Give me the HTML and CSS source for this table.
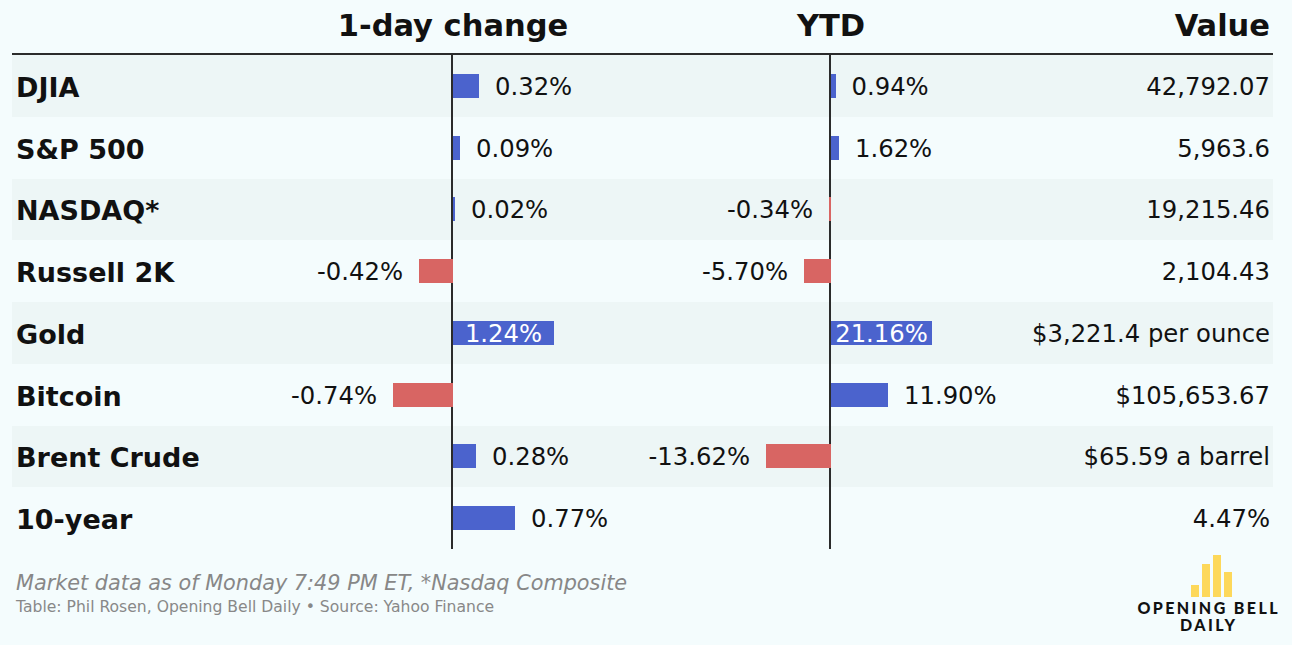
FILE: index.html
```html
<!DOCTYPE html>
<html lang="en">
<head>
<meta charset="utf-8">
<title>Markets</title>
<link rel="stylesheet" href="styles.css">
</head>
<body>
<div class="wrap">
  <div class="head">
    <div></div>
    <div class="hcell">1-day change</div>
    <div class="hcell">YTD</div>
    <div class="hcell hval">Value</div>
  </div>
  <div class="table">
    <div class="row">
      <div class="label">DJIA</div>
      <div class="neg"></div>
      <div class="pos"><span class="bar up" style="width:26px"></span><span class="num">0.32%</span></div>
      <div class="neg"></div>
      <div class="pos"><span class="bar up" style="width:4.5px"></span><span class="num">0.94%</span></div>
      <div class="value">42,792.07</div>
    </div>
    <div class="row">
      <div class="label">S&amp;P 500</div>
      <div class="neg"></div>
      <div class="pos"><span class="bar up" style="width:7px"></span><span class="num">0.09%</span></div>
      <div class="neg"></div>
      <div class="pos"><span class="bar up" style="width:8px"></span><span class="num">1.62%</span></div>
      <div class="value">5,963.6</div>
    </div>
    <div class="row">
      <div class="label">NASDAQ*</div>
      <div class="neg"></div>
      <div class="pos"><span class="bar up" style="width:2px"></span><span class="num">0.02%</span></div>
      <div class="neg"><span class="num">-0.34%</span><span class="bar down" style="width:2px"></span></div>
      <div class="pos"></div>
      <div class="value">19,215.46</div>
    </div>
    <div class="row">
      <div class="label">Russell 2K</div>
      <div class="neg"><span class="num">-0.42%</span><span class="bar down" style="width:34px"></span></div>
      <div class="pos"></div>
      <div class="neg"><span class="num">-5.70%</span><span class="bar down" style="width:27px"></span></div>
      <div class="pos"></div>
      <div class="value">2,104.43</div>
    </div>
    <div class="row">
      <div class="label">Gold</div>
      <div class="neg"></div>
      <div class="pos"><span class="bar up inbar" style="width:101px">1.24%</span></div>
      <div class="neg"></div>
      <div class="pos"><span class="bar up inbar" style="width:101px">21.16%</span></div>
      <div class="value">$3,221.4 per ounce</div>
    </div>
    <div class="row">
      <div class="label">Bitcoin</div>
      <div class="neg"><span class="num">-0.74%</span><span class="bar down" style="width:60px"></span></div>
      <div class="pos"></div>
      <div class="neg"></div>
      <div class="pos"><span class="bar up" style="width:57px"></span><span class="num">11.90%</span></div>
      <div class="value">$105,653.67</div>
    </div>
    <div class="row">
      <div class="label">Brent Crude</div>
      <div class="neg"></div>
      <div class="pos"><span class="bar up" style="width:23px"></span><span class="num">0.28%</span></div>
      <div class="neg"><span class="num">-13.62%</span><span class="bar down" style="width:65px"></span></div>
      <div class="pos"></div>
      <div class="value">$65.59 a barrel</div>
    </div>
    <div class="row">
      <div class="label">10-year</div>
      <div class="neg"></div>
      <div class="pos"><span class="bar up" style="width:62px"></span><span class="num">0.77%</span></div>
      <div class="neg"></div>
      <div class="pos"></div>
      <div class="value">4.47%</div>
    </div>
  </div>
  <div class="foot">
    <div class="notes">
      <div class="note">Market data as of Monday 7:49 PM ET, *Nasdaq Composite</div>
      <div class="source">Table: Phil Rosen, Opening Bell Daily • Source: Yahoo Finance</div>
    </div>
    <div class="logo">
      <div class="logo-bars">
        <span class="lb lb1"></span>
        <span class="lb lb2"></span>
        <span class="lb lb3"></span>
        <span class="lb lb4"></span>
      </div>
      <div class="logo-text">OPENING BELL<br>DAILY</div>
    </div>
  </div>
</div>
</body>
</html>
```
FILE: styles.css
```css
html, body {
  margin: 0;
  padding: 0;
  background: #f4fcfd;
}
body {
  font-family: "DejaVu Sans", Verdana, sans-serif;
  color: #111;
}
.wrap {
  margin: 0 19px 0 12px;
}
.head {
  display: grid;
  grid-template-columns: 241px 400px 356px 1fr;
  height: 53px;
  box-sizing: content-box;
  border-bottom: 2px solid #2b2b2b;
}
.hcell {
  font-weight: bold;
  font-size: 30.5px;
  line-height: 36px;
  padding-top: 8px;
  text-align: center;
}
.hval {
  text-align: right;
  padding-right: 3px;
}
.row {
  display: grid;
  grid-template-columns: 241px 200px 187px 191px 178px 1fr;
  height: 61.75px;
  align-items: center;
}
.row:nth-child(odd) {
  background: #edf6f6;
}
.row > div {
  height: 100%;
  display: flex;
  align-items: center;
  box-sizing: border-box;
}
.label {
  font-weight: bold;
  font-size: 27px;
  padding-left: 4px;
  padding-top: 3px;
}
.neg {
  justify-content: flex-end;
  gap: 16px;
  border-right: 2px solid #2b2b2b;
}
.pos {
  justify-content: flex-start;
  gap: 16px;
}
.num, .value {
  font-size: 24.3px;
  line-height: 24px;
}
.num {
  white-space: nowrap;
  padding-top: 2px;
}
.value {
  justify-content: flex-end;
  padding-right: 3px;
  padding-top: 2px;
  white-space: nowrap;
}
.bar {
  display: flex;
  height: 24px;
  flex: none;
}
.up {
  background: #4b63cd;
}
.down {
  background: #d86563;
}
.neg .bar {
  margin-right: -2px;
}
.inbar {
  color: #fff;
  font-size: 24.3px;
  line-height: 24px;
  justify-content: center;
  white-space: nowrap;
  padding-top: 1px;
  box-sizing: border-box;
}
.foot {
  display: flex;
  justify-content: space-between;
  align-items: flex-start;
}
.notes {
  padding-top: 22px;
  padding-left: 4px;
}
.note {
  font-style: italic;
  font-size: 20.8px;
  line-height: 24px;
  color: #878787;
}
.source {
  font-size: 15.6px;
  line-height: 19px;
  margin-top: 3px;
  color: #888;
}
.logo {
  margin-top: 6px;
  margin-right: -5px;
  width: 141px;
  display: flex;
  flex-direction: column;
  align-items: center;
}
.logo-bars {
  display: flex;
  align-items: flex-end;
  gap: 2.7px;
  height: 42px;
  margin-left: 8px;
}
.lb {
  width: 8px;
  background: #fdd85a;
}
.lb1 { height: 12px; }
.lb2 { height: 33px; }
.lb3 { height: 42px; }
.lb4 { height: 25px; }
.logo-text {
  font-family: Lato, "DejaVu Sans", sans-serif;
  font-weight: 900;
  font-size: 16px;
  line-height: 16.5px;
  letter-spacing: 2.4px;
  padding-left: 2.4px;
  text-align: center;
  white-space: nowrap;
  color: #111;
  margin-top: 3px;
}
```
